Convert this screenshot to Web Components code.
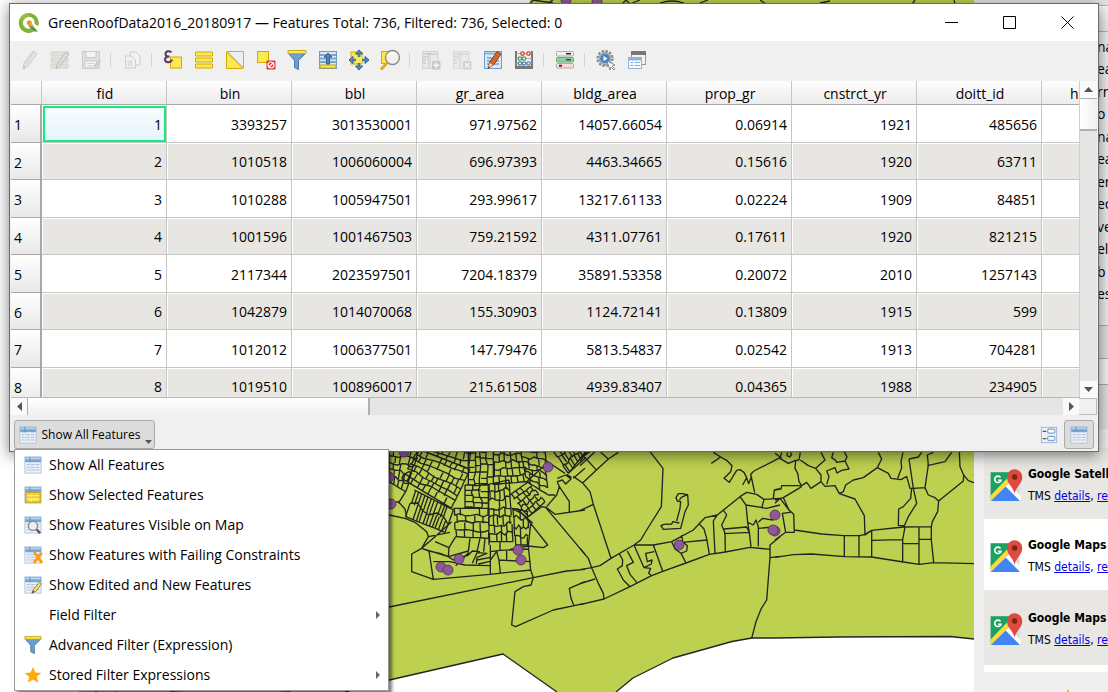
<!DOCTYPE html>
<html lang="en">
<head>
<meta charset="utf-8">
<title>GreenRoofData2016_20180917</title>
<style>
html, body { margin: 0; height: 100%; }
body { font: 14px/20px "Open Sans", "Noto Sans", sans-serif; color: #000; background: #fff; overflow: hidden; }
</style>
</head>
<body>
<gis-desktop>
  <gis-map slot="map"></gis-map>
  <side-panel slot="panel"></side-panel>
  <attribute-window slot="window" heading="GreenRoofData2016_20180917 — Features Total: 736, Filtered: 736, Selected: 0">
    <attribute-toolbar slot="toolbar"></attribute-toolbar>
    <feature-table></feature-table>
    <view-bar slot="footer"></view-bar>
  </attribute-window>
</gis-desktop>

<script>
const tableArt = `<rect x="1" y="1" width="18" height="18" fill="#eef2f8" stroke="#a9c3e0"/><path d="M1 1h18v6H1z" fill="#8db5dc"/><path d="M2 2.500h4M7 2.500h11" stroke="#cfe2f3"/><path d="M2 5.500h17M6.500 1v6" stroke="#5f93c8"/><path d="M3 9.500h3M8 9.500h4M13 9.500h4M3 12.500h3M8 12.500h4M13 12.500h4M3 15.500h3M8 15.500h4M13 15.500h4" stroke="#9fb4d0"/><path d="M7 8v10" stroke="#cfdbe9"/>`;
const yellow = 'fill="#fce94f" stroke="#d4aa00"';
const funnel = `<path d="M1 4l6 7v7l4 2v-9l7-7z" fill="#6d9fcd" stroke="#4a77a8" transform="translate(.5 -.5)"/><path d="M1 .500h18v3H1z" fill="#fce94f" stroke="#c9a81c"/>`;
const ICONS = {
  table: tableArt,
  selected: tableArt + `<rect x="2" y="7" width="16" height="11" fill="#f5e14a" stroke="#c9a81c" stroke-width="1.500"/><path d="M4 10.500h12M4 14.500h12M8 8v10" stroke="#fff3a0"/><path d="M3 9h14M3 12.500h14" stroke="#d2b52c" stroke-width=".800"/>`,
  visible: tableArt + `<circle cx="10" cy="11" r="5" fill="#eef1f4" stroke="#858a8e" stroke-width="1.500"/><path d="M14 15l4 4" stroke="#555" stroke-width="2.500"/>`,
  failing: tableArt + `<path d="M10 7l3-.500 2.500 4L18 7l3 1-3.500 5 4 5-3 1.500-3-4.500-3 4.500-3-1.500 4-5z" fill="#ff9c0d"/>`,
  edited: tableArt + `<path d="M9 19l1.500-4L17 7l2.500 1.500-6 8.500z" fill="#f3e26a" stroke="#8d8440"/><path d="M8 20l2-4 2 1.500z" fill="#555"/>`,
  funnel,
  star: `<path d="M10 1l2.600 6.200 6.700.500-5.100 4.300 1.600 6.500-5.800-3.500-5.800 3.500 1.600-6.500L.700 7.700l6.700-.500z" fill="#ffa90a"/>`,
  pencil: `<g opacity=".5"><path d="M4 19l1-6L14 1l4 2.500L9 16z" fill="#dcdcd5" stroke="#a8a8a0"/><path d="M7 14l8-12" stroke="#aaa"/><path d="M4 19l1-3 2 1.500z" fill="#888"/></g>`,
  editRows: `<g opacity=".5"><path d="M1 2h17v4H1zM1 8h17v4H1zM1 14h17v4H1z" fill="#d8d4c0" stroke="#bab69f"/><path d="M6 19l1-5 9-12 3 2-9 12z" fill="#ccc" stroke="#888"/></g>`,
  save: `<g opacity=".5"><path d="M1.500 1.500h17v17h-17z" fill="#cfcfcf" stroke="#aaa"/><path d="M5 1.500h10v6H5z" fill="#f8f8f8" stroke="#aaa"/><path d="M4 11h12v7H4z" fill="#f8f8f8" stroke="#aaa"/><path d="M6 13.500h7M6 16h6" stroke="#b5b5b5"/><path d="M12 19l1-4 5-6 2 2-5 6z" fill="#bcaaa2"/></g>`,
  copy: `<g opacity=".5" fill="#f5f5f5" stroke="#aaa"><path d="M8 2h6l4 4v9H8z"/><path d="M3.500 6h6l4 4v8h-10z"/><path d="M5.500 11h5M5.500 13h5M5.500 15h5"/></g>`,
  expression: `<rect x="7.500" y="7" width="11" height="11" ${yellow}/><path d="M8.500 2.500C7 .300 2.500 1 2.500 4c0 2 2 2.500 4 2.500-3 0-4.500 1-4.500 3 0 3.500 6 3.500 7 0" fill="none" stroke="#5c3566" stroke-width="2"/>`,
  selectAll: `<path d="M1.500 2h17v4h-17zM1.500 8h17v4h-17zM1.500 14h17v4h-17z" ${yellow}/>`,
  invert: `<path d="M2 1.500h16.500V18z" fill="#eee" stroke="#aaa"/><path d="M1.500 2v16.500H18z" ${yellow}/>`,
  deselect: `<rect x="1.500" y="1.500" width="11" height="11" ${yellow}/><rect x="10.500" y="10.500" width="9" height="9" rx="1" fill="#d9363c"/><circle cx="15" cy="15" r="3" fill="none" stroke="#fff" stroke-width="1.200"/><path d="M13 17l4-4" stroke="#fff" stroke-width="1.200"/>`,
  moveTop: `<rect x="1.500" y="1.500" width="17" height="17" fill="#d9e7f3" stroke="#6c9ccb"/><path d="M2 5h16M2 8.500h16M2 12h16" stroke="#7ba7d0" stroke-width="2"/><path d="M2 15h16v3H2z" fill="#fce94f" stroke="#c4a000"/><path d="M10 3l4 4h-2.500v7h-3V7H6z" fill="#5788bb" stroke="#345f8c"/>`,
  pan: `<rect x="2" y="2" width="11" height="12" ${yellow}/><path d="M10 0l3.500 4h-7zM10 20l3.500-4h-7zM0 10l4-3.500v7zM20 10l-4-3.500v7z" fill="#5b8cc1" stroke="#345f8c"/><path d="M10 4v3M10 13v3M4 10h3M13 10h3" stroke="#4a79ad" stroke-width="2.500"/><path d="M7 7h6v6H7z" fill="#fce94f"/>`,
  zoom: `<rect x="1.500" y="1.500" width="9" height="12" ${yellow}/><path d="M7 13l-6 6.500" stroke="#d3b123" stroke-width="3"/><circle cx="12.500" cy="7.500" r="7" fill="#f2f2eb" stroke="#8a8a84" stroke-width="1.400"/><path d="M8 6c1-3 5-4 7-2" stroke="#fff" stroke-width="2" fill="none"/>`,
  newField: `<g opacity=".5"><path d="M1.500 1.500h6v17h-6zM9 1.500h8v17H9z" fill="#e6e6e6" stroke="#b5b5b5"/><path d="M2 4h15M2 7h6M2 10h3M2 13h3" stroke="#aaa" stroke-width="1.500"/><rect x="11" y="11" width="8.500" height="8.500" rx="1" fill="#a7a799"/><path d="M15.200 12.500v5.500M12.500 15.200h5.500" stroke="#fff" stroke-width="1.500"/></g>`,
  deleteField: `<g opacity=".4"><path d="M1.500 1.500h6v17h-6zM9 1.500h8v17H9z" fill="#e6e6e6" stroke="#b5b5b5"/><path d="M2 4h15M2 7h6M2 10h3M2 13h3" stroke="#aaa" stroke-width="1.500"/><rect x="11" y="11" width="8.500" height="8.500" rx="1" fill="#b9a0a0"/><path d="M13 13l4.500 4.500M17.500 13L13 17.500" stroke="#fff" stroke-width="1.500"/></g>`,
  organize: `<rect x="1.500" y="1.500" width="17" height="17" fill="#dbe9f6" stroke="#6c9ccb"/><path d="M2 3.500h16M4 8h12M4 11h12M4 14h12" stroke="#8cb2d8" stroke-width="2"/><path d="M5 18l1.500-5.500L14 1.500l4 2.500-7.500 11z" fill="#d2672f" stroke="#934119"/><path d="M5 18l1.500-5 3.500 2z" fill="#f1d5ae"/><path d="M5 18.500l.600-2 1.400 1z" fill="#222"/>`,
  calculator: `<path d="M2 1v17M18 1v17" stroke="#777" stroke-width="2"/><path d="M1 17.500h18" stroke="#777" stroke-width="3"/><path d="M2 3.500h16M2 8.500h16M2 13.500h16" stroke="#aaa"/><g fill="#fff" stroke-width="1.300"><g stroke="#d33b3b"><circle cx="8.500" cy="3.500" r="1.700"/><circle cx="14.500" cy="3.500" r="1.700"/></g><g stroke="#43a352"><circle cx="6" cy="8.500" r="1.700"/><circle cx="10" cy="8.500" r="1.700"/></g><g stroke="#4a7fb5"><circle cx="6" cy="13.500" r="1.700"/><circle cx="10" cy="13.500" r="1.700"/><circle cx="14.500" cy="13.500" r="1.700"/></g></g>`,
  format: `<rect x="1.500" y="1.500" width="17" height="4.500" rx="1" fill="#f2f2f2" stroke="#aaa"/><path d="M11 3.700h5" stroke="#222" stroke-width="1.500"/><rect x="1.500" y="7.500" width="17" height="4.500" rx="1" fill="#8fd39a" stroke="#6aa874"/><path d="M11 9.700h5" stroke="#1d5a2a" stroke-width="1.500"/><rect x="1.500" y="13.500" width="17" height="4.500" rx="1" fill="#f8dcdc" stroke="#aaa"/><path d="M4 15.700h3" stroke="#c00" stroke-width="2"/>`,
  actions: `<circle cx="9" cy="8.500" r="7.600" fill="#eee" stroke="#858585" stroke-width="2" stroke-dasharray="2.500 1.500"/><circle cx="9" cy="8.500" r="6" fill="#d8dcdf" stroke="#888"/><circle cx="9" cy="8.500" r="5" fill="#4b86c0"/><path d="M7.500 6l4 2.500-4 2.500z" fill="#fff"/><path d="M11 11l8 4-3 1 3 3-1 1-3-3-1 3z" fill="#fff" stroke="#777" stroke-width=".800"/>`,
  dock: `<rect x="4.500" y="1.500" width="14" height="13" fill="#f4f4f4" stroke="#999"/><path d="M4 3h15" stroke="#777" stroke-width="4"/><rect x="1.500" y="7.500" width="13" height="11" fill="#f8fbff" stroke="#8eb3da"/><path d="M1 9h14" stroke="#8eb3da" stroke-width="3"/><path d="M3.500 12.500h3M8 12.500h5M3.500 15.500h3M8 15.500h5" stroke="#82a9d2"/>`,
  form: `<rect x="1.500" y="1.500" width="17" height="17" fill="#edf1f6" stroke="#92b4d8"/><path d="M3 6h4M3 14h4" stroke="#555" stroke-width="1.500"/><rect x="8.500" y="3.500" width="8" height="4.500" rx="1.500" fill="#fff" stroke="#7ba4cf" stroke-width="1.300"/><rect x="8.500" y="11.500" width="8" height="4.500" rx="1.500" fill="#fff" stroke="#7ba4cf" stroke-width="1.300"/>`,
  qgis: `<path d="M10 0a10 10 0 1 0 4.500 18.800l-2.500-3.600A6 6 0 1 1 15.600 11l3.700 2A10 10 0 0 0 10 0z" fill="#83b037"/><path d="M10 0a10 10 0 0 0-9.500 7l4 1A6 6 0 0 1 10 4z" fill="#93bf45"/><path d="M11 10l8 8.500h-4.500l-5-5.500z" fill="#4f9a3c"/><circle cx="10.300" cy="9.700" r="2.500" fill="#f08b2c"/><path d="M9 12l2-3 4 4-2 1z" fill="#e9a13e"/>`,
  gmaps: `<path d="M1 2h18v18H1z" fill="#d9d9d9"/><path d="M1 2h16L1 18.500z" fill="#1ba261"/><path d="M1 20l9.500-9 9 9z" fill="#4285f4"/><path d="M1 16.500L15 2h4L1 20z" fill="#fdd93b"/><path d="M10.500 11l2-2L20 17v3h-.500z" fill="#fff"/><path d="M3 20l7.500-7.500L17 20z" fill="#4285f4"/><path d="M7.200 5.300A2 2 0 1 0 7.500 7H5.700" fill="none" stroke="#fff" stroke-width="1"/><path d="M16 16c0-4-4.800-6.500-4.800-11a4.800 4.800 0 0 1 9.600 0c0 4.500-4.800 7-4.800 11z" fill="#dd4b3e"/><circle cx="16" cy="5" r="1.700" fill="#7d2318"/>`
};

class BaseElement extends HTMLElement {
  constructor() { super(); this.attachShadow({ mode: 'open' }); }
  paint(css, html) { this.shadowRoot.innerHTML = `<style>*{box-sizing:border-box}${css}</style>${html}`; }
}
const define = (name, cls) => customElements.define(name, cls);

define('ui-icon', class extends BaseElement {
  connectedCallback() {
    this.paint(`:host{display:block;flex:none;width:20px;height:20px}svg{display:block;width:100%;height:100%;overflow:visible}`,
      `<svg viewBox="0 0 20 20" aria-hidden="true">${ICONS[this.getAttribute('name')] || ''}</svg>`);
  }
});

define('gis-desktop', class extends BaseElement {
  connectedCallback() {
    this.paint(`
      :host{display:block;position:relative;min-height:100vh;overflow:hidden}
      .back{display:flex;height:100vh}
      ::slotted([slot=map]){flex:1;min-width:0}
      ::slotted([slot=panel]){flex:none;width:134px}
      ::slotted([slot=window]){position:absolute;top:3px;left:9px;right:9px}`,
      `<div class="back"><slot name="map"></slot><slot name="panel"></slot></div><slot name="window"></slot>`);
  }
});

/* City blocks: each quad is split in rows, and every row in staggered lots. */
function blocks(list) {
  let seed = 7;
  const rnd = () => (seed = (seed * 16807) % 2147483647) / 2147483647;
  let d = '';
  for (const [a, b, c, e, rows, cols] of list) {
    const at = (u, v) => [0, 1].map(i => Math.round((a[i] * (1 - u) + b[i] * u) * (1 - v) + (e[i] * (1 - u) + c[i] * u) * v)).join(' ');
    for (let r = 0; r <= rows; r++) {
      d += `M${at(0, r / rows)}`;
      for (let k = 1; k <= 6; k++) {
        const bend = r === 0 || r === rows ? 0 : (rnd() - .5) * .55;
        d += `L${at(k / 6, (r + bend) / rows)}`;
      }
      if (r === rows) break;
      const shift = rnd() * .6 - .3;
      for (let k = 0; k <= cols; k++) {
        const u = Math.min(1, Math.max(0, (k + shift + (rnd() - .5) * .4) / cols));
        if (rnd() > .1) d += `M${at(u, r / rows)}L${at(u, (r + 1) / rows)}`;
      }
    }
  }
  return d;
}

define('gis-map', class extends BaseElement {
  connectedCallback() {
    const dense = blocks([
      [[12, 12], [110, 12], [62, 140], [12, 110], 5, 4],
      [[100, 12], [255, 72], [200, 190], [50, 100], 6, 9],
      [[140, 0], [260, 0], [250, 72], [110, 16], 3, 6],
      [[88, 135], [205, 195], [180, 262], [62, 215], 2, 12],
      [[250, 5], [250, 120], [325, 120], [325, 5], 4, 6],
      [[325, 5], [405, 5], [425, 110], [325, 118], 5, 5],
      [[240, 120], [240, 190], [310, 190], [310, 120], 3, 4],
      [[310, 118], [372, 105], [384, 290], [312, 290], 7, 4],
      [[205, 190], [312, 190], [312, 280], [212, 275], 4, 4],
      [[384, 190], [430, 200], [430, 300], [390, 300], 4, 2],
      [[405, 5], [480, 5], [490, 150], [425, 110], 7, 3],
      [[375, 150], [430, 110], [480, 170], [430, 215], 5, 4],
      [[500, 12], [600, -20], [610, 10], [550, 85], 3, 8]
    ]);
    this.paint(`:host{display:block;background:#fff;overflow:hidden}svg{display:block;width:100%;height:100%}`, `
    <svg viewBox="0 0 974 692" preserveAspectRatio="xMaxYMin slice" role="img" aria-label="Map of city blocks">
      <path d="M79 692V560L380 430 530 0H974V639L950 636.500 838 637 775 638 752 638 732 641.500 673 658 633 678 616 692H557L503 654 385 681 345 692z" fill="#bed04f"/>
      <g fill="none" stroke="#232323" stroke-width="1.300" stroke-linejoin="round">
        <path d="M974 639L950 636.500 838 637 775 638 752 638 732 641.500 673 658 633 678 616 692M557 692L503 654 385 681 345 692"/>
        <path d="M530 4l3-4M533 0l20 3M548 3l5-3M622 4l4-4 4 4 10-4M660 3q12-4 24 0M700 3l8-3M760 0l6 4M820 3l10-2M912 4l3-4M954 0l1 4M95 691q12-3 22 0M170 691q60-4 120 0"/>
      </g>
      <g fill="none" stroke="#232323" stroke-width="4" stroke-linejoin="round">
        <g transform="translate(385 445) scale(.33333)">
          <path d="${dense}"/>
          <path d="M12 210L60 220 90 232 125 260 130 275 110 310 80 327V380L145 403 315 388 437 375M12 486L445 398 545 378 600 373M110 310L132 318 145 403M110 310L190 335M110 310L150 275 200 230M130 275L195 262M212 275L192 308 190 335 205 345M192 308L150 290M0 180l40-10 20 22 5 25M62 140L40 175M132 318L165 325 190 335 250 318 255 280M205 345L250 330 262 318 285 320M145 350L195 350 240 360 315 362M212 362l40-40M262 355l14-32 30 2-30 12-2 20M276 345l40-8M280 357l35-8M255 280L250 320M285 280L276 320M312 280V300M300 280L296 320M316 300V388M316 320l30-4 84-4M316 345L335 320 342 345 346 384M342 345L437 350M365 318V345M375 313l55-10M345 290V316M380 190L410 205 437 235 488 300 475 308 430 303 437 375 445 398 438 420 415 425 390 440 380 540 392 545 505 495 600 475M437 235L430 303M395 190l48 45M480 185L600 328M430 215l40-30 15 3 25 20 90-13M553 203V170L523 125 515 150 485 185M523 125l-6-15 15-5 10 12 16-15-16-12-25 10M490 150l20 0M540 85L480 45M425 110L480 60M565 100l35-30M560 98L545 88M600 410L553 430 558 460 567 482M550 85l50-45"/>
        </g>
        <g transform="translate(580 445) scale(.33333)">
          <path d="M-20 94L8 114 50 74 85 42 115 22M0 50L20 20M0 40l30-20M0 62L45 20M8 30l40 44M62 22L85 42M8 114L30 140 40 178 93 340M0 197L40 178M210 20L249 70 244 185 200 255 182 285 162 300 93 340 60 362 35 368 0 374M0 310L25 340 35 368 55 415 70 445 72 462M0 416L45 402M0 479L72 462 150 425 215 392 248 379 318 354 388 328 436 321 510 307 570 313M162 300L220 300 275 290 340 255 375 218 412 210 480 155 500 142 530 148 552 163 600 160M118 326L128 345 127 362 112 372 130 405 150 425M142 318L160 352 140 362 150 388 170 412M162 300L192 368 212 370 206 385 215 392M192 368L214 357 216 345 202 350 197 325 223 320M220 300L248 379M275 290L285 312 303 325 318 354M305 270L308 290 322 302 320 318 303 325M308 292L380 285M357 236L372 252 380 280 388 328M375 218L357 236M412 210L400 228 405 326M430 195L440 210 425 240 435 265 436 321M432 252L500 246 508 262 432 266M480 155L498 180 503 232 508 262 513 305M498 180L560 190 600 180M503 232L520 240 528 225 535 245 535 304M535 232L548 220 578 225 586 211M535 250L580 246M545 190L552 163M580 160L583 135 600 132M570 313V300L600 275M570 313L570 338 560 465 543 492 528 530 515 580M570 338L600 334M400 22L422 36 394 55M422 36L440 46 456 62 452 80 432 100 448 112 470 76 480 74 492 82 500 98 488 120M500 98l6 18 8-20-2-8 10-10 78-40M514 96L524 143M480 155L500 142M323 150L325 180 315 200 302 250 250 253 243 242 252 238 275 237 278 230 298 234M323 150L308 146 295 146 288 158 292 168 302 170 300 190 290 228M298 165l6-8 20-9"/>
        </g>
        <g transform="translate(775 445) scale(.33333)">
          <path d="M0 134L18 132 20 122 80 122 95 112 108 130 138 110 150 124 180 122 193 146 240 162 268 212 270 270 290 256 385 246 469 245M0 165L25 158 80 125M25 158L42 195 56 208 58 262 32 262 22 205 45 202M0 175L15 160 48 203M32 262L0 285M58 255L140 267 205 272 255 272 270 268 290 256V336M0 337L55 329 110 327 210 335 290 336 385 351 433 358 476 353 597 356M208 272V335M252 272V335M290 286L383 284M390 246L383 284V351M383 295L432 296M432 246V358M432 283H469M469 245V285L476 353M20 22L15 40 40 55 62 46 60 70 68 85 72 110 80 122M38 22L36 32 44 36 50 28 46 22M76 22L72 45 62 46M76 45L100 62 122 70 138 90 138 110M122 70L150 45 138 22M175 22L170 38 182 46 185 52 210 48 216 36 208 20M210 48L222 72 200 76 186 84 180 68 155 78 162 95 155 118M205 140L212 120 235 105 265 98 307 68 320 42 310 22M193 146L205 140M307 68L340 85 348 100 378 104 395 94 405 130 418 130M384 22L378 50 380 68 368 100M402 42L430 36 440 22M402 42L415 130 425 175 400 215 388 242 370 241 371 192 385 185 407 160 410 130M415 130L450 128 460 60 457 30 475 22M457 62L510 50 530 22M450 128L460 150 480 158 491 168 488 200 472 230 469 245M491 168L565 108 566 90 555 65 553 22M566 90L580 107 597 113M0 25l20 15"/>
        </g>
      </g>
      <g fill="#8d5a99" stroke="#4b2f55" stroke-width=".800">
        <circle cx="566" cy="0" r="5"/><circle cx="597" cy="2" r="5"/><circle cx="404" cy="452" r="5"/><circle cx="389" cy="477" r="5"/><circle cx="391" cy="504" r="5"/><circle cx="548" cy="467" r="5"/><circle cx="518" cy="550" r="5"/><circle cx="521" cy="560" r="5"/><circle cx="459" cy="559" r="5"/><circle cx="441" cy="567" r="5"/><circle cx="448" cy="570" r="5"/><circle cx="679" cy="545" r="5"/><circle cx="775" cy="515" r="5"/><circle cx="775" cy="531" r="5"/><circle cx="773" cy="530" r="5"/>
      </g>
    </svg>`);
  }
});

define('service-item', class extends BaseElement {
  connectedCallback() {
    this.paint(`
      :host{display:flex;align-items:center;gap:7px;height:71px;padding:2px 0 0 5px;white-space:nowrap;background:#e8e7e3;
        font:12px/22px "DejaVu Sans Condensed","DejaVu Sans",sans-serif;font-stretch:condensed}
      :host([plain]){background:#fff}:host([tall]){height:75px}
      ui-icon{width:32px;height:32px}b,span{display:block}a{color:#0000ee}`,
      `<ui-icon name="gmaps"></ui-icon><div><b><slot></slot></b><span>TMS <a href="#details">details</a>, <a href="#remove">remove</a></span></div>`);
  }
});

define('side-panel', class extends BaseElement {
  connectedCallback() {
    const words = ['na', 'ea', 'rn', 'o', 'na', 'ea', 'en', 'ec', 've', 'ele', 'b', 'es'];
    this.paint(`
      :host{display:block;background:#efefef;overflow:hidden}
      .edge{height:5px;background:#e4e4e4}
      .head{height:27px;border:solid #b5b5b5;border-width:1px 0;background:linear-gradient(#fafafa,#ececec)}
      ul{list-style:none;margin:0;padding:4px 0 0 123px;height:293px}
      li{height:22px;line-height:22px;white-space:nowrap}li:nth-child(even){height:23px}
      .tab{height:33px;background:#e1e1e1;border-top:1px solid #aaa}
      .field{height:27px;background:#f4f4f4;border:solid #aaa;border-width:1px 0}
      .gap{height:44px;background:#e1e1e1}
      .services{margin:19px 0 0 10px;padding-bottom:7px;background:#fff}
      ui-icon{margin:16px auto 0 84px}`,
      `<div class="edge"></div><div class="head"></div><ul>${words.map(w => `<li>${w}</li>`).join('')}</ul>
      <div class="tab"></div><div class="field"></div><div class="gap"></div>
      <div class="services"><service-item>Google Satellite</service-item><service-item plain>Google Maps</service-item><service-item tall>Google Maps</service-item></div>
      <ui-icon name="star"></ui-icon>`);
  }
});

define('attribute-window', class extends BaseElement {
  connectedCallback() {
    this.paint(`
      :host{display:block;background:#f0f0f0;border:1px solid #6b6b6b;box-shadow:0 3px 14px rgba(0,0,0,.5)}
      header{display:flex;align-items:center;height:37px;padding:0 2px 0 9px;background:#fff}
      h1{flex:1;margin:0 0 0 9px;font:inherit;white-space:nowrap}
      button{width:58px;height:36px;padding:0;border:0;background:none;display:grid;place-items:center}
      svg{width:13px;height:13px;fill:none;stroke:#000}`,
      `<header><ui-icon name="qgis"></ui-icon><h1>${this.getAttribute('heading')}</h1>
        <button aria-label="Minimize"><svg viewBox="0 0 13 13"><path d="M0 6.500h13"/></svg></button>
        <button aria-label="Maximize"><svg viewBox="0 0 13 13"><path d="M.500.500h12v12H.500z"/></svg></button>
        <button aria-label="Close"><svg viewBox="0 0 13 13"><path d="M.500.500l12 12M12.500.500l-12 12"/></svg></button>
      </header><slot name="toolbar"></slot><slot></slot><slot name="footer"></slot>`);
  }
});

define('attribute-toolbar', class extends BaseElement {
  connectedCallback() {
    const tools = 'pencil editRows save | copy | expression selectAll invert deselect funnel moveTop pan zoom | newField deleteField organize calculator | format | actions dock';
    this.paint(`
      :host{display:flex;align-items:center;height:40px;padding:0 0 2px 3px}
      button{width:31px;height:32px;padding:0;border:0;background:none;display:grid;place-items:center}
      i{width:1px;height:14px;margin:0 5px 0 4px;background:#d2d2d2}`,
      tools.split(' ').map(t => t === '|' ? '<i></i>' : `<button aria-label="${t}"><ui-icon name="${t}"></ui-icon></button>`).join(''));
    this.style.boxSizing = 'border-box';
  }
});

define('feature-table', class extends BaseElement {
  connectedCallback() {
    const cols = ['fid', 'bin', 'bbl', 'gr_area', 'bldg_area', 'prop_gr', 'cnstrct_yr', 'doitt_id'];
    const rows = `1 3393257 3013530001 971.97562 14057.66054 0.06914 1921 485656
2 1010518 1006060004 696.97393 4463.34665 0.15616 1920 63711
3 1010288 1005947501 293.99617 13217.61133 0.02224 1909 84851
4 1001596 1001467503 759.21592 4311.07761 0.17611 1920 821215
5 2117344 2023597501 7204.18379 35891.53358 0.20072 2010 1257143
6 1042879 1014070068 155.30903 1124.72141 0.13809 1915 599
7 1012012 1006377501 147.79476 5813.54837 0.02542 1913 704281
8 1019510 1008960017 215.61508 4939.83407 0.04365 1988 234905`.split('\n').map(r => r.split(' '));
    this.paint(`
      :host{display:grid;grid-template-columns:1fr 18px;grid-template-rows:317px 17px;padding-left:1px;margin-right:1px}
      .view{overflow:hidden;border-bottom:1px solid #b9b9b9;background:#fff}
      table{table-layout:fixed;width:1156px;border-spacing:0}
      .num{width:31px}
      th,td{padding:0;font-weight:400;border:solid #c6c6c6;border-width:0 1px 1px 0}
      thead th{height:24px;background:linear-gradient(#fdfdfd,#ececec);border-bottom-color:#a8a8a8;padding:3px 0 0 2px;line-height:20px}
      thead th:last-child{text-align:left;padding-left:28px}
      tbody tr{height:38px}tbody tr:nth-child(even){height:37px}
      tbody th{text-align:left;padding:3px 0 0 3px;background:linear-gradient(#fff,#e8e8e8);border-right:2px solid #a8a8a8;border-bottom-color:#a8a8a8}
      td{text-align:right;padding:2px 4px 0 0}
      tr:nth-child(even) td{background:#e8e6e3;box-shadow:inset 1px 1px #fff}
      td.current{background:linear-gradient(#fafdff,#e6f3fd);outline:2px solid #0bf07d;outline-offset:-3px}
      .v,.h{display:flex;background:#e5e5e5}
      .v{flex-direction:column;border-left:1px solid #d0d0d0}
      button{flex:none;padding:0;border:0;background:#fafafa;display:grid;place-items:center}
      .v button{height:17px;width:100%}.h button{width:16px;height:17px}
      .v .thumb{height:33px;border:solid #b0b0b0;border-width:1px 0 2px;background:linear-gradient(90deg,#fff,#f0f0f0)}
      .h .thumb{width:343px;border:solid #b0b0b0;border-width:0 2px 0 1px;background:linear-gradient(#fff,#f0f0f0)}
      s{flex:1}.corner{border:solid #bbb;border-width:1px 1px 1px 0}
      svg{width:9px;height:9px;fill:#555}`,
      `<div class="view"><table><colgroup><col class="num">${'<col>'.repeat(9)}</colgroup>
        <thead><tr><th></th>${cols.map(c => `<th scope="col">${c}</th>`).join('')}<th scope="col">h</th></tr></thead>
        <tbody>${rows.map((r, i) => `<tr><th scope="row">${i + 1}</th>${r.map((v, k) => `<td${i + k ? '' : ' class="current"'}>${v}</td>`).join('')}<td></td></tr>`).join('')}</tbody></table></div>
      <div class="v"><button aria-label="Scroll up"><svg viewBox="0 0 9 9"><path d="M0 7l4.500-5L9 7z"/></svg></button><div class="thumb"></div><s></s><button aria-label="Scroll down"><svg viewBox="0 0 9 9"><path d="M0 2l4.500 5L9 2z"/></svg></button></div>
      <div class="h"><button aria-label="Scroll left"><svg viewBox="0 0 9 9"><path d="M7 0L2 4.500 7 9z"/></svg></button><div class="thumb"></div><s></s><button aria-label="Scroll right"><svg viewBox="0 0 9 9"><path d="M2 0l5 4.500L2 9z"/></svg></button></div>
      <div class="corner"></div>`);
  }
});

define('menu-entry', class extends BaseElement {
  connectedCallback() {
    this.paint(`
      :host{display:block}
      button{display:flex;align-items:center;gap:7px;width:100%;height:30px;padding:0 8px 0 9px;border:0;background:none;font:inherit;color:inherit;text-align:left}
      ui-icon{width:18px;height:18px}span{flex:1}svg{width:4px;height:8px;fill:#666}`,
      `<button role="menuitem"><ui-icon name="${this.getAttribute('icon') || ''}"></ui-icon><span><slot></slot></span>${this.hasAttribute('submenu') ? '<svg viewBox="0 0 4 8"><path d="M0 0l4 4-4 4z"/></svg>' : ''}</button>`);
  }
});

define('view-bar', class extends BaseElement {
  connectedCallback() {
    this.paint(`
      :host{display:flex;align-items:flex-start;box-sizing:border-box;height:36px;padding:5px 4px 0}
      .anchor{position:relative}
      button{height:29px;padding:0 4px;border:1px solid #aaa;border-radius:3px;background:#dcdcdc;display:flex;align-items:center;font:inherit;color:inherit}
      .pick{width:141px;gap:2px;font-size:12px;white-space:nowrap;justify-content:space-between;padding-right:2px}
      .pick svg{width:7px;height:4px;fill:#555;align-self:flex-end;margin-bottom:4px}
      .pick ui-icon,.mode ui-icon{width:18px;height:18px}
      .mode{width:30px;justify-content:center;border-color:transparent;background:none;padding:0}
      .on{border-color:#aaa;background:#dcdcdc}
      .space{flex:1}
      [role=menu]{position:absolute;z-index:1;left:0;top:100%;width:375px;background:#fff;border:1px solid #999;box-shadow:3px 3px 3px rgba(0,0,0,.5)}`,
      `<div class="anchor"><button class="pick" aria-haspopup="menu" aria-expanded="true"><ui-icon name="table"></ui-icon>Show All Features<svg viewBox="0 0 7 4"><path d="M0 0h7L3.500 4z"/></svg></button>
        <div role="menu">
          <menu-entry icon="table">Show All Features</menu-entry>
          <menu-entry icon="selected">Show Selected Features</menu-entry>
          <menu-entry icon="visible">Show Features Visible on Map</menu-entry>
          <menu-entry icon="failing">Show Features with Failing Constraints</menu-entry>
          <menu-entry icon="edited">Show Edited and New Features</menu-entry>
          <menu-entry submenu>Field Filter</menu-entry>
          <menu-entry icon="funnel">Advanced Filter (Expression)</menu-entry>
          <menu-entry icon="star" submenu>Stored Filter Expressions</menu-entry>
        </div></div>
      <span class="space"></span>
      <button class="mode" aria-label="Form view"><ui-icon name="form"></ui-icon></button>
      <button class="mode on" aria-label="Table view"><ui-icon name="table"></ui-icon></button>`);
  }
});
</script>
</body>
</html>
